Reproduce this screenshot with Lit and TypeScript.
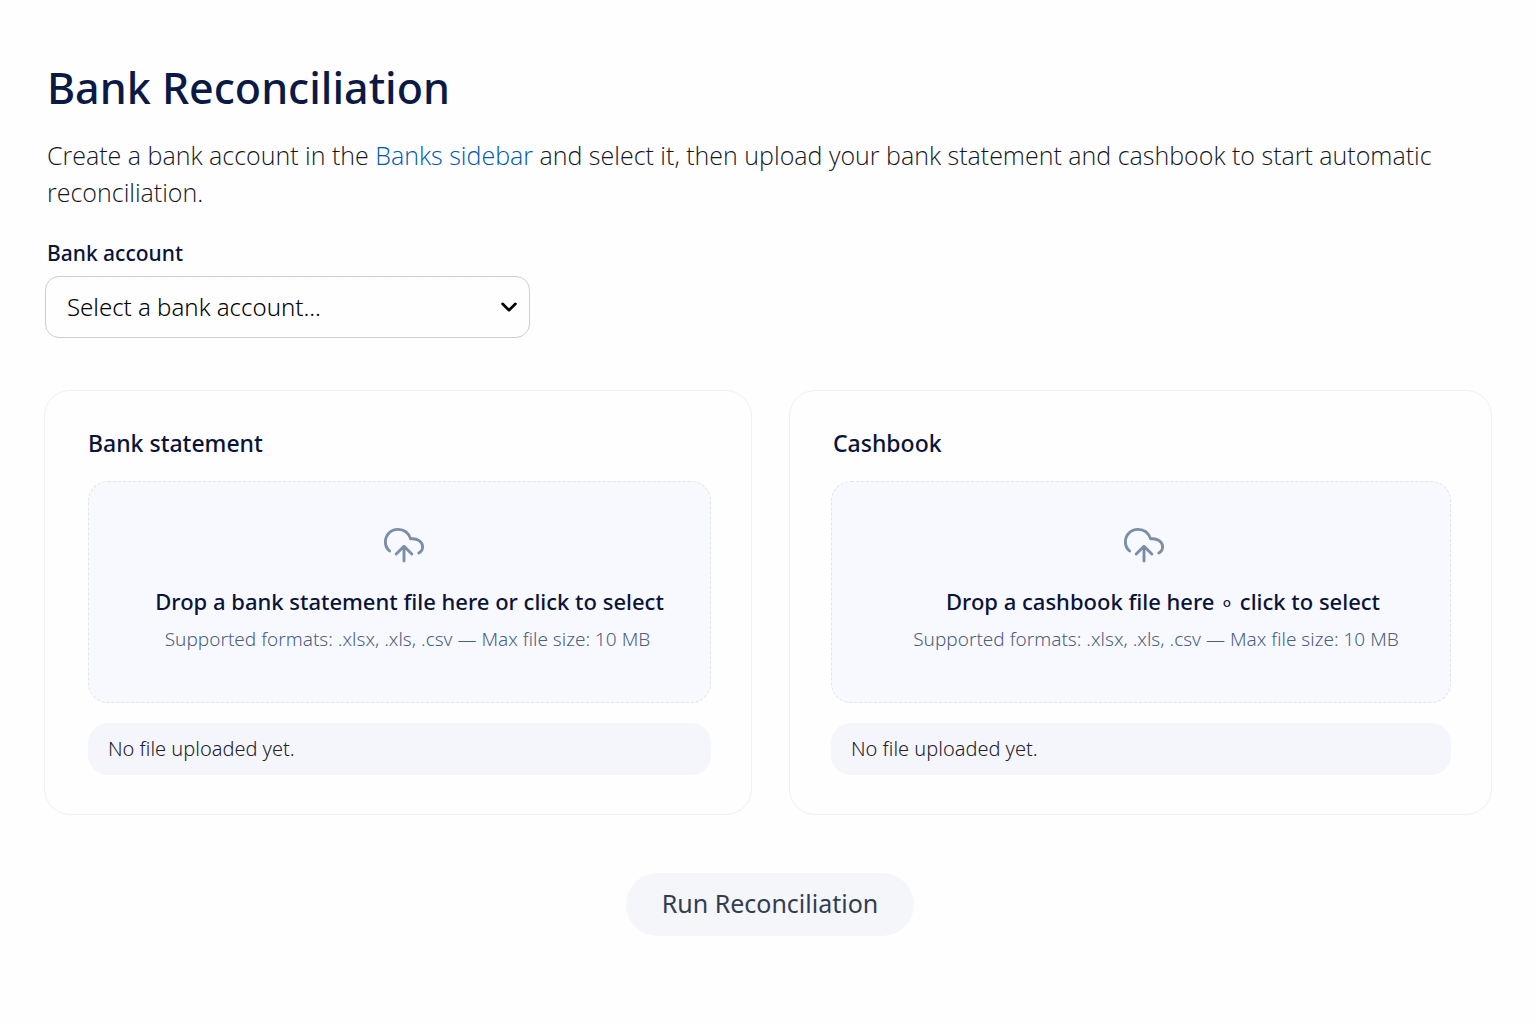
import { LitElement, html, css } from "lit";
import { customElement, property } from "lit/decorators.js";

@customElement("upload-card")
class UploadCard extends LitElement {
  @property() heading = "";
  @property() prompt = "";
  @property() inputId = "file";

  static styles = css`
    :host {
      display: block;
      box-sizing: border-box;
      padding: 34px 40px 39px var(--card-inset, 43px);
      border: 1px solid #f0f1f5;
      border-radius: 26px;
      background: #fefefe;
    }
    .heading {
      margin: 0 0 20px;
      padding-left: var(--heading-inset, 0);
      font-size: 23px;
      line-height: 36px;
      font-weight: 550;
      color: #0a1338;
    }
    .zone {
      display: flex;
      flex-direction: column;
      align-items: center;
      box-sizing: border-box;
      min-height: 222px;
      padding: 43px 0 38px;
      border: 1px dashed #dfe4ef;
      border-radius: 20px;
      background: #f8f9fe;
      cursor: pointer;
    }
    .icon {
      width: 42px;
      height: 38px;
      margin-left: var(--icon-inset, 8px);
      color: #7b8ea8;
    }
    .prompt {
      margin-top: 20px;
      padding-left: var(--prompt-inset, 20px);
      font-size: 22px;
      line-height: 36px;
      font-weight: 500;
      color: #0a1338;
    }
    .hint {
      padding-left: var(--hint-inset, 16px);
      font-size: 19px;
      line-height: 40px;
      font-weight: 300;
      color: #4a6080;
    }
    .file {
      position: absolute;
      width: 1px;
      height: 1px;
      opacity: 0;
    }
    .status {
      margin: 20px 0 0;
      padding: 8px 20px;
      border-radius: 20px;
      background: #f5f6fb;
      font-size: 20px;
      line-height: 36px;
      font-weight: 300;
      color: #1c212c;
    }
  `;

  render() {
    return html`
      <h2 class="heading">${this.heading}</h2>
      <label class="zone" for=${this.inputId}>
        <svg class="icon" viewBox="0 0 42 38" fill="none" stroke="currentColor" stroke-width="2.9" stroke-linecap="round" stroke-linejoin="round" aria-hidden="true">
          <path d="M6.600 26C3.800 23.600 2.400 20.300 2.400 16.900C2.400 10 7.800 4.400 15 4.400C21 4.400 25.600 8 27.600 13.900C34.400 12.900 39.600 16.900 39.600 21.800C39.600 24.400 38.200 26.900 35.800 28" />
          <path d="M21 36V21.600M13.200 29L21 21.200L28.800 29" />
        </svg>
        <span class="prompt">${this.prompt}</span>
        <span class="hint">Supported formats: .xlsx, .xls, .csv — Max file size: 10 MB</span>
        <input class="file" id=${this.inputId} type="file" accept=".xlsx,.xls,.csv" />
      </label>
      <p class="status">No file uploaded yet.</p>
    `;
  }
}

@customElement("app-root")
class AppRoot extends LitElement {
  static styles = css`
    :host {
      display: block;
      box-sizing: border-box;
      min-height: 100vh;
      padding: 56px 44px 88px;
      background: #fefefe;
      font-family: "Noto Sans", "Open Sans", sans-serif;
    }
    .title {
      margin: 0;
      padding-left: 3px;
      font-size: 43px;
      line-height: 64px;
      font-weight: 500;
      color: #0a1a44;
    }
    .intro {
      margin: 17px 0 0;
      padding: 0 3px;
      font-family: "Open Sans", "Noto Sans", sans-serif;
      font-size: 25px;
      line-height: 37px;
      font-weight: 300;
      color: #14171d;
    }
    .link {
      color: #0057b0;
      text-decoration: none;
    }
    .label {
      display: block;
      margin-top: 25px;
      padding-left: 3px;
      font-size: 21px;
      line-height: 34px;
      font-weight: 500;
      color: #0a1338;
    }
    .field {
      display: grid;
      align-items: center;
      max-width: 485px;
      margin: 6px 0 0 1px;
    }
    .select {
      grid-area: 1 / 1;
      appearance: none;
      width: 100%;
      height: 62px;
      padding: 0 56px 2px 21px;
      border: 1px solid #c9cedb;
      border-radius: 14px;
      background: #fefefe;
      font-family: inherit;
      font-size: 24px;
      font-weight: 300;
      color: #000;
    }
    .chevron {
      grid-area: 1 / 1;
      justify-self: end;
      width: 18px;
      height: 12px;
      margin-right: 12px;
      pointer-events: none;
    }
    .cards {
      display: grid;
      grid-template-columns: 708fr 703fr;
      gap: 37px;
      margin-top: 52px;
    }
    .cashbook {
      --card-inset: 41px;
      --heading-inset: 2px;
      --icon-inset: 6px;
      --prompt-inset: 44px;
      --hint-inset: 30px;
    }
    .actions {
      display: flex;
      justify-content: center;
      padding-left: 4px;
      margin-top: 58px;
    }
    .run {
      height: 63px;
      padding: 0 36px 3px;
      border: 0;
      border-radius: 32px;
      background: #f5f6fa;
      font-family: inherit;
      font-size: 25px;
      font-weight: 400;
      color: #333d50;
    }
  `;

  render() {
    return html`
      <main>
        <h1 class="title">Bank Reconciliation</h1>
        <p class="intro">
          Create a bank account in the <a class="link" href="#banks">Banks sidebar</a> and select it, then upload your
          bank statement and cashbook to start automatic reconciliation.
        </p>
        <label class="label" for="account">Bank account</label>
        <div class="field">
          <select class="select" id="account">
            <option>Select a bank account...</option>
          </select>
          <svg class="chevron" viewBox="0 0 18 12" fill="none" stroke="#000" stroke-width="2.6" stroke-linecap="round" stroke-linejoin="round" aria-hidden="true">
            <path d="M2.500 2.800L9 9.200L15.500 2.800" />
          </svg>
        </div>
        <div class="cards">
          <upload-card heading="Bank statement" prompt="Drop a bank statement file here or click to select" inputId="statement-file"></upload-card>
          <upload-card class="cashbook" heading="Cashbook" prompt="Drop a cashbook file here ∘ click to select" inputId="cashbook-file"></upload-card>
        </div>
        <div class="actions">
          <button class="run" type="button">Run Reconciliation</button>
        </div>
      </main>
    `;
  }
}
